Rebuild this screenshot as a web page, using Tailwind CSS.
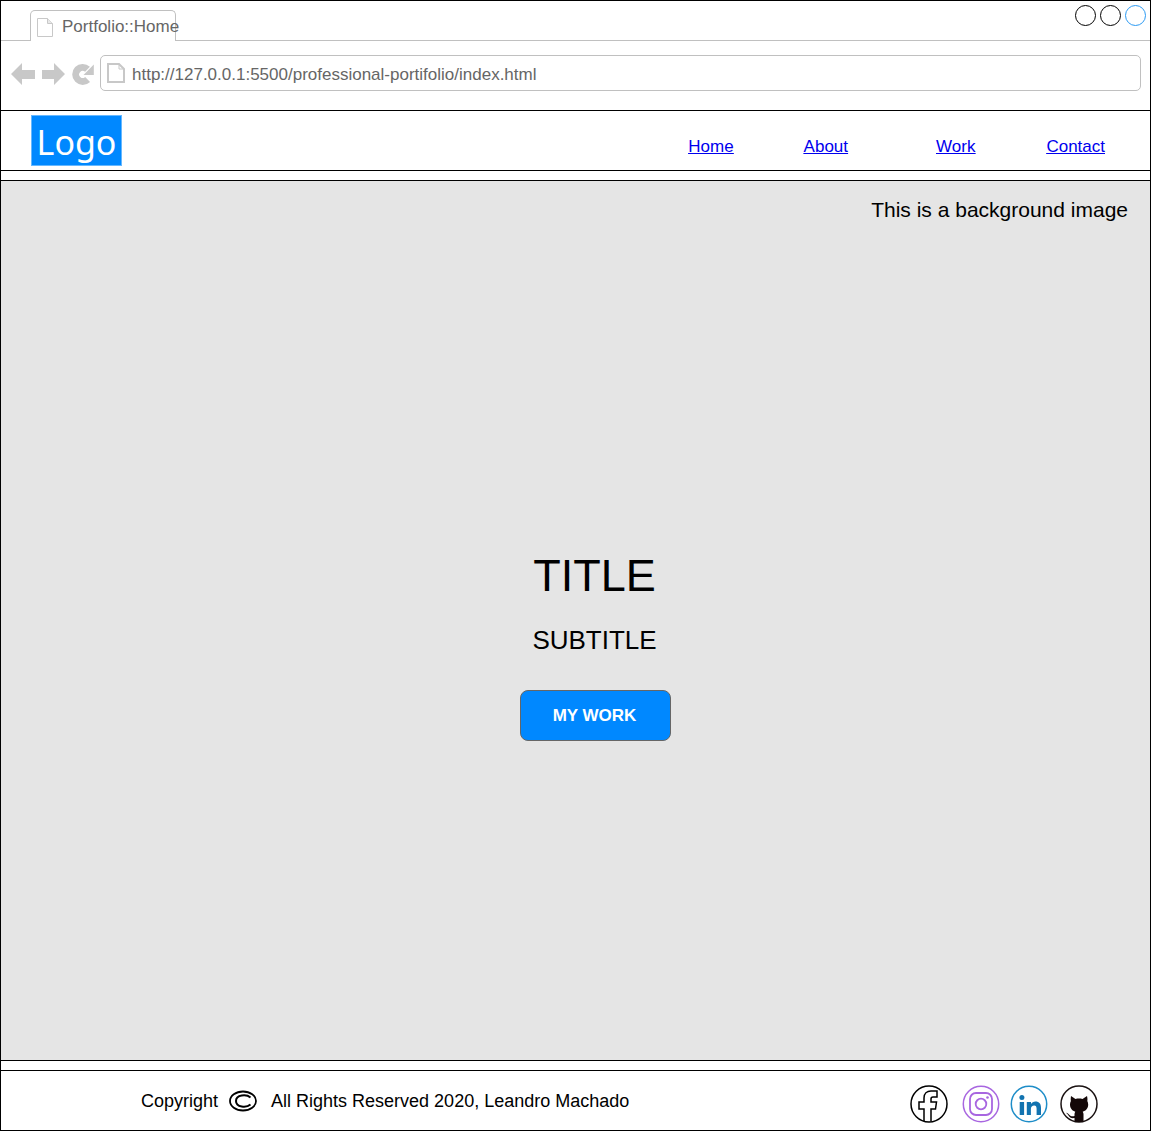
<!DOCTYPE html>
<html lang="en">
<head>
  <meta charset="UTF-8" />
  <title>Portfolio::Home</title>
  <script src="https://cdn.jsdelivr.net/npm/@tailwindcss/browser@4"></script>
</head>
<body class="bg-white font-['Liberation_Sans',sans-serif] text-black">
  <div class="w-[1151px] h-[1131px] border border-black flex flex-col">

    <!-- tab bar -->
    <div class="h-10 shrink-0 border-b border-[#c0c0c0] flex pl-[29px] pr-[4px]">
      <div class="mt-[9px] w-[146px] h-[31px] border border-b-0 border-[#c0c0c0] rounded-t-[5px] bg-white flex items-center pl-[6px] -mb-px z-10">
        <svg width="16" height="19" viewBox="0 0 16 19" class="shrink-0 mt-[2px]"><path d="M.5.5h10l5 5v13H.5z" fill="#fff" stroke="#c8c8c8"/><path d="M10.5.5v5h5" fill="#e8e8e8" stroke="#c8c8c8"/></svg>
        <span class="ml-[9px] pt-[2px] text-[17px] text-[#666] whitespace-nowrap">Portfolio::Home</span>
      </div>
      <div class="ml-auto mt-[4px] flex gap-1 h-[21px]">
        <span class="w-[21px] h-[21px] rounded-full border border-black"></span>
        <span class="w-[21px] h-[21px] rounded-full border border-black"></span>
        <span class="w-[21px] h-[21px] rounded-full border border-[#2b9af3]"></span>
      </div>
    </div>

    <!-- toolbar -->
    <div class="h-[70px] shrink-0 border-b border-black flex items-start pt-[14px] pl-[10px] pr-[9px]">
      <div class="flex items-center gap-[7px] h-[36px] mt-[1px] shrink-0">
        <svg width="24" height="24" viewBox="0 0 24 24"><path d="M0 12 11 1v7h13v9H11v6z" fill="#c8c8c8"/></svg>
        <svg width="23" height="24" viewBox="0 0 23 24"><path d="M23 12 12 1v7H0v9h12v6z" fill="#c8c8c8"/></svg>
        <svg width="22" height="24" viewBox="0 0 22 24" fill="#c8c8c8">
          <path d="M15.500 7.300A7 7 0 1 0 15.600 17.400" fill="none" stroke="#c8c8c8" stroke-width="7"/>
          <path d="M21.800 2.500V13H11.500z"/>
        </svg>
      </div>
      <div class="ml-[6px] flex-1 h-[36px] border border-[#c0c0c0] rounded-[5px] flex items-center pl-[6px]">
        <svg width="18" height="20" viewBox="0 0 18 20" class="shrink-0"><path d="M1 1h11l5 5v13H1z" fill="#fff" stroke="#c8c8c8" stroke-width="2"/><path d="M12 1v5h5" fill="none" stroke="#c8c8c8"/></svg>
        <span class="ml-[7px] pt-[3px] text-[17px] text-[#666] whitespace-nowrap">http://127.0.0.1:5500/professional-portifolio/index.html</span>
      </div>
    </div>

    <!-- site header -->
    <header class="h-[60px] shrink-0 border-b border-black flex pl-[30px]">
      <a class="mt-[4px] w-[91px] h-[51px] bg-[#0088ff] border border-[#66b8ff] flex items-center justify-center pt-[2px] font-['Noto_Sans',sans-serif] text-[34px] text-white leading-none">Logo</a>
      <nav class="ml-auto pt-[26px] pr-[45px] flex text-[17px] leading-[20px] text-[#0000ee] underline">
        <a href="#">Home</a>
        <a class="ml-[70px]" href="#">About</a>
        <a class="ml-[88px]" href="#">Work</a>
        <a class="ml-[71px]" href="#">Contact</a>
      </nav>
    </header>

    <div class="h-[9px] shrink-0"></div>

    <!-- hero -->
    <main class="flex-1 border-y border-black bg-[#e5e5e5] flex flex-col items-center pl-10">
      <p class="self-end mt-[15px] mr-[22px] text-[21px] leading-[28px]">This is a background image</p>
      <h1 class="mt-[326px] -ml-[2px] text-[45px] leading-[52px]">TITLE</h1>
      <h2 class="mt-[22px] -ml-[2px] text-[26px] leading-[32px]">SUBTITLE</h2>
      <a class="mt-[34px] w-[151px] h-[51px] rounded-[8px] bg-[#0088ff] border border-[#666] flex items-center justify-center pr-[2px] text-[17px] font-bold text-white">MY WORK</a>
    </main>

    <div class="h-[9px] shrink-0"></div>

    <!-- footer -->
    <footer class="h-[60px] shrink-0 border-t border-black flex items-center pl-[140px] text-[18px]">
      <span class="pt-[2px]">Copyright</span>
      <svg width="28" height="22" viewBox="0 0 28 22" class="ml-[11px]" fill="none" stroke="#000">
        <ellipse cx="14" cy="11" rx="13" ry="9.500" stroke-width="1.800"/>
        <path d="M21.500 7.500C17.500 4 7 4.500 7 11c0 6.500 10.500 7 14.500 3.500" stroke-width="2"/>
      </svg>
      <span class="ml-[14px] pt-[2px]">All Rights Reserved 2020, Leandro Machado</span>

      <div class="ml-auto mr-[52px] mt-[6px] flex items-center">
        <svg width="38" height="38" viewBox="0 0 38 38" fill="none" stroke="#000" stroke-width="1.500">
          <circle cx="19" cy="19" r="18"/>
          <path d="M14 36V24H9v-7h5v-4c0-4.500 3-7 7-7h6v6h-4c-1.500 0-2 .8-2 2v3h5.500l-1 7H21v12"/>
        </svg>
        <svg width="38" height="38" viewBox="0 0 38 38" fill="none" stroke="#a866e0" class="ml-[14px]">
          <circle cx="19" cy="19" r="17.700" stroke-width="1.500"/>
          <rect x="8" y="8" width="22" height="22" rx="6" stroke-width="1.800"/>
          <circle cx="19" cy="19" r="5.300" stroke-width="1.800"/>
          <circle cx="25.500" cy="12.500" r="1.300" fill="#a866e0" stroke="none"/>
        </svg>
        <svg width="38" height="38" viewBox="0 0 38 38" fill="none" class="ml-[10px]">
          <circle cx="19" cy="19" r="17.700" stroke="#1e8dc8" stroke-width="1.500"/>
          <circle cx="11.900" cy="12.500" r="2.500" fill="#1273b0"/>
          <path d="M9.700 17h4.400v13H9.700zM16.800 17h4.200v2c.9-1.500 2.500-2.400 4.400-2.400 3.900 0 5.600 2.400 5.600 6.400v7h-4.400v-6.200c0-2.200-.7-3.400-2.400-3.400-2 0-3.300 1.300-3.300 3.600v6h-4.100z" fill="#1273b0"/>
        </svg>
        <svg width="38" height="38" viewBox="0 0 38 38" class="ml-[12px]">
          <circle cx="19" cy="19" r="18" fill="none" stroke="#1a1212" stroke-width="1.500"/>
          <path d="M11 11l4.500 3c2.300-.6 4.700-.6 7 0L27 11c.5 2 .6 3.700.3 5 .6 1 .9 2.200.9 3.500 0 4-2.500 6.500-5.500 7.200.6.700.8 1.500.8 2.500V36.500c-3 .8-6 .8-9 0V33c-3 .5-5-.5-6-2.500-.6-1-1.500-2-2.500-2.700 1.500.2 2.500 1 3.500 2.200 1 1.300 2.800 1.500 5 1v-1.800c0-1 .2-1.800.8-2.500C12.500 26 10 23.500 10 19.500c0-1.300.3-2.500.9-3.500-.3-1.300-.2-3 .1-5z" fill="#140808"/>
        </svg>
      </div>
    </footer>
  </div>
</body>
</html>
